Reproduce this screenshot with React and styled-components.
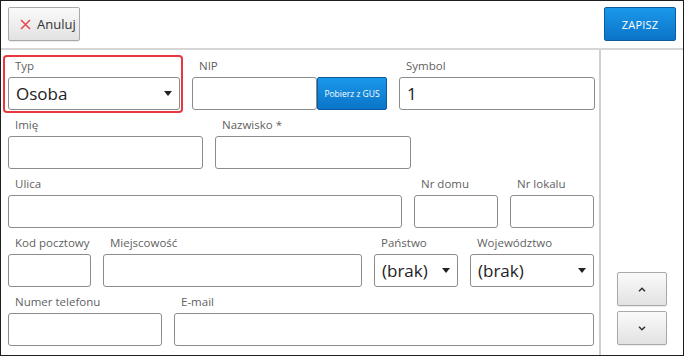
import React from 'react'
import styled, { createGlobalStyle, css } from 'styled-components'

const GlobalStyle = createGlobalStyle`
  html, body {
    margin: 0;
    padding: 0;
    background: #fff;
  }
  body {
    font-family: 'Open Sans', 'Noto Sans', sans-serif;
    color: #333;
  }
  * { box-sizing: border-box; }
`

const Frame = styled.div`
  width: 684px;
  height: 356px;
  border: 1px solid #1e1e1e;
  display: flex;
  flex-direction: column;
  background: #fff;
`

const Toolbar = styled.header`
  height: 49px;
  flex-shrink: 0;
  display: flex;
  align-items: center;
  justify-content: space-between;
  padding: 0 7px 1px 7px;
  border-bottom: 2px solid #d6d6d6;
`

const greyButton = css`
  background: linear-gradient(#fafafa, #e2e2e2);
  border: 1px solid #a9a9a9;
  border-radius: 2px;
  color: #333;
  box-shadow: 0 1px 1px rgba(0, 0, 0, 0.08);
`

const blueButton = css`
  background: linear-gradient(#1b98ea, #0a74c8);
  border: 1px solid #0b5c9e;
  border-radius: 2px;
  color: #fff;
`

const CancelButton = styled.button`
  ${greyButton}
  width: 72px;
  height: 34px;
  display: flex;
  align-items: center;
  gap: 6px;
  padding: 0 0 0 11px;
  font-family: inherit;
  font-size: 13px;
`

const SaveButton = styled.button`
  ${blueButton}
  width: 72px;
  height: 34px;
  font-family: inherit;
  font-size: 11px;
  letter-spacing: 0.2px;
`

const Body = styled.div`
  flex: 1;
  display: flex;
  min-height: 0;
`

const Form = styled.main`
  width: 600px;
  flex-shrink: 0;
  padding: 7px 6px 0 7px;
  display: flex;
  flex-direction: column;
  gap: 6px;
  border-right: 2px solid #cfcfcf;
`

const Row = styled.div`
  display: flex;
  gap: 12px;
`

const Field = styled.div`
  position: relative;
  width: ${p => p.w}px;
  flex-shrink: 0;
  display: flex;
  flex-direction: column;

  ${p => p.focused && css`
    &::before {
      content: '';
      position: absolute;
      left: -5px;
      top: -2px;
      right: -3px;
      bottom: -3px;
      border: 2px solid #e8383d;
      border-radius: 4px;
      pointer-events: none;
    }
  `}
`

const Label = styled.label`
  height: 20px;
  padding: 1px 0 0 7px;
  font-size: 11.5px;
  line-height: 16px;
  color: #5f5f5f;
  white-space: nowrap;
`

const Input = styled.div`
  height: 33px;
  min-width: 0;
  border: 1px solid #8c8c8c;
  border-radius: 3px;
  background: #fff;
  display: flex;
  align-items: center;
  padding: 0 7px;
  font-size: 17px;
  color: #222;
`

const Select = styled(Input)`
  justify-content: space-between;
  padding-right: 7px;
`

const Caret = styled.span`
  width: 0;
  height: 0;
  border-left: 4px solid transparent;
  border-right: 4px solid transparent;
  border-top: 5px solid #222;
`

const InputGroup = styled.div`
  display: flex;
  height: 33px;

  & > ${Input} {
    flex: 1;
  }
`

const GusButton = styled.button`
  ${blueButton}
  width: 70px;
  height: 33px;
  flex-shrink: 0;
  padding: 0;
  font-family: inherit;
  font-size: 8.5px;
`

const Side = styled.aside`
  flex: 1;
  display: flex;
  flex-direction: column;
  justify-content: flex-end;
  align-items: center;
  gap: 5px;
  padding: 0 1px 10px 0;
`

const NavButton = styled.button`
  ${greyButton}
  width: 50px;
  height: 34px;
  display: flex;
  align-items: center;
  justify-content: center;
  padding: 0;
`

const Chevron = ({ up }) => (
  <svg width='8' height='5' viewBox='0 0 8 5'>
    <path
      d={up ? 'M1 4.2 L4 1.2 L7 4.2' : 'M1 0.8 L4 3.8 L7 0.8'}
      fill='none'
      stroke='#333'
      strokeWidth='1.5'
    />
  </svg>
)

const CloseIcon = () => (
  <svg width='11' height='11' viewBox='0 0 11 11'>
    <path d='M1 1 L10 10 M10 1 L1 10' stroke='#e8474c' strokeWidth='1.5' />
  </svg>
)

const TextField = ({ label, w }) => (
  <Field w={w}>
    <Label>{label}</Label>
    <Input />
  </Field>
)

const SelectField = ({ label, w, value, focused }) => (
  <Field w={w} focused={focused}>
    <Label>{label}</Label>
    <Select>
      <span>{value}</span>
      <Caret />
    </Select>
  </Field>
)

const App = () => (
  <>
    <GlobalStyle />
    <Frame>
      <Toolbar>
        <CancelButton>
          <CloseIcon />
          Anuluj
        </CancelButton>
        <SaveButton>ZAPISZ</SaveButton>
      </Toolbar>
      <Body>
        <Form>
          <Row>
            <SelectField label='Typ' w={172} value='Osoba' focused />
            <Field w={195}>
              <Label>NIP</Label>
              <InputGroup>
                <Input />
                <GusButton>Pobierz z GUS</GusButton>
              </InputGroup>
            </Field>
            <Field w={196}>
              <Label>Symbol</Label>
              <Input>1</Input>
            </Field>
          </Row>
          <Row>
            <TextField label='Imię' w={195} />
            <TextField label='Nazwisko *' w={196} />
          </Row>
          <Row>
            <TextField label='Ulica' w={394} />
            <TextField label='Nr domu' w={84} />
            <TextField label='Nr lokalu' w={84} />
          </Row>
          <Row>
            <TextField label='Kod pocztowy' w={83} />
            <TextField label='Miejscowość' w={259} />
            <SelectField label='Państwo' w={84} value='(brak)' />
            <SelectField label='Województwo' w={124} value='(brak)' />
          </Row>
          <Row>
            <TextField label='Numer telefonu' w={154} />
            <TextField label='E-mail' w={420} />
          </Row>
        </Form>
        <Side>
          <NavButton>
            <Chevron up />
          </NavButton>
          <NavButton>
            <Chevron />
          </NavButton>
        </Side>
      </Body>
    </Frame>
  </>
)

export default App
